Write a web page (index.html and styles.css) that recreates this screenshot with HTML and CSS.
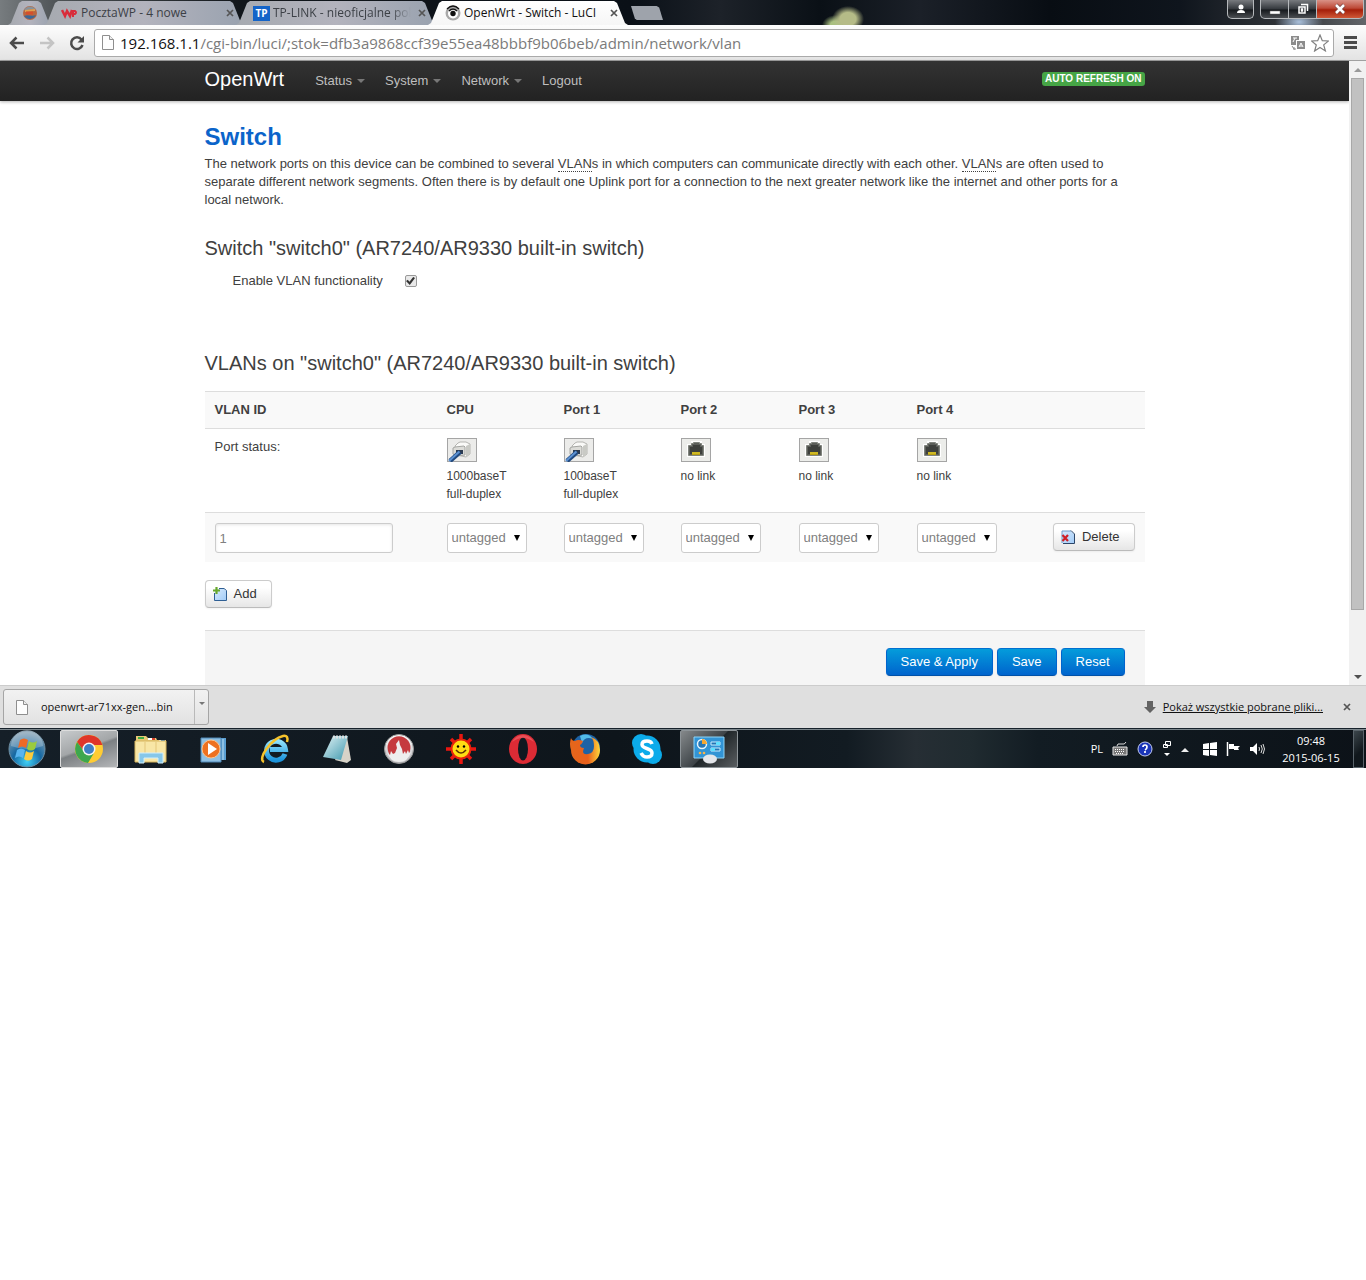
FILE: index.html
```html
<!DOCTYPE html>
<html lang="en">
<head>
<meta charset="utf-8">
<title>OpenWrt - Switch - LuCI</title>
<link rel="stylesheet" href="styles.css">
</head>
<body>
<svg class="defs" width="0" height="0" aria-hidden="true">
  <defs>
    <linearGradient id="blueSheet" x1="0" y1="0" x2="1" y2="1"><stop offset="0" stop-color="#d5e9fc"/><stop offset="1" stop-color="#a4cdf8"/></linearGradient>
    <radialGradient id="orb" cx=".5" cy=".85" r=".8"><stop offset="0" stop-color="#3fd0f6"/><stop offset=".5" stop-color="#1668a2"/><stop offset="1" stop-color="#7f9db2"/></radialGradient>
    <linearGradient id="ieBlue" x1="0" y1="0" x2="0" y2="1"><stop offset="0" stop-color="#8fe0fb"/><stop offset="1" stop-color="#1c94dc"/></linearGradient>
    <linearGradient id="silver" x1="0" y1="0" x2="0" y2="1"><stop offset="0" stop-color="#fff"/><stop offset="1" stop-color="#b4b4b8"/></linearGradient>
    <linearGradient id="noteGlass" x1="0" y1="0" x2="1" y2="1"><stop offset="0" stop-color="#e2f3f5"/><stop offset="1" stop-color="#3e98ae"/></linearGradient>
    <linearGradient id="foxFire" x1="0" y1="0" x2="1" y2="0"><stop offset="0" stop-color="#e4671c"/><stop offset=".6" stop-color="#e9601c"/><stop offset="1" stop-color="#ffd83c"/></linearGradient>
    <symbol id="plug" viewBox="0 0 30 24">
      <rect x=".5" y=".5" width="29" height="23" fill="#ececea" stroke="#a5a5a5"/>
      <path d="M8 8l3-3 2-1h6l4 2v10l-4 3-9-2z" fill="#fafaf8" stroke="#b5b5b1"/>
      <path d="M19 8l4-2v10l-4 3z" fill="#c9cac5"/>
      <path d="M6 10l2-1 9-1 1 1v8l-8 1-4-2z" fill="#dcdcd8" stroke="#a5a6a2"/>
      <path d="M9 12h7v4h-7z" fill="#2c3b50"/>
      <path d="M13 14L3 23" stroke="#20497f" stroke-width="4.500"/>
      <path d="M12.500 13.500L2 23" stroke="#5c91d2" stroke-width="2"/>
    </symbol>
    <symbol id="socket" viewBox="0 0 30 24">
      <rect x=".5" y=".5" width="29" height="23" fill="#ecedea" stroke="#a5a5a5"/>
      <path d="M6 6h4V3h11v3h3v13H6z" fill="#fff"/>
      <path d="M7.500 7.500h3v-2h2v-1h6v1h2v2h2v10h-15z" fill="#5b5e59" stroke="#80847d"/>
      <path d="M9 16V9h3V7h7v2h2v7z" fill="#3d403c"/>
      <path d="M11 14h8v3h-8z" fill="#b79e13"/><path d="M12 14v2m2-2v2m2-2v2m2-2v2" stroke="#e6d333"/>
    </symbol>
    <symbol id="file" viewBox="0 0 14 17">
      <path d="M1.500 1.500h7l4 4v10h-11z" fill="#fdfdfd" stroke="#8e8e8e"/><path d="M8.500 1.500v4h4" fill="#eee" stroke="#8e8e8e"/>
    </symbol>
    <symbol id="close" viewBox="0 0 8 8"><path d="M1 1l6 6M7 1L1 7" stroke="#555" stroke-width="1.700"/></symbol>
  </defs>
</svg>

<header class="titlebar">
  <div class="tabs">
    <a class="tab tab-pinned" href="#" aria-label="Pinned tab">
      <svg width="16" height="16" viewBox="0 0 16 16"><circle cx="8" cy="8" r="7" fill="#b9663f"/><path d="M2 5a7 7 0 0 1 12 0c-4-2-8 1-12 0z" fill="#87929c"/><path d="M3 6l10-1" stroke="#dfa050" stroke-width="2"/><path d="M2 11c4-2 8 1 12-1a7 7 0 0 1-12 1z" fill="#3d6795"/><path d="M4 8h7" stroke="#d64e2b" stroke-width="3"/></svg>
    </a>
    <div class="tab">
      <svg width="17" height="16" viewBox="0 0 17 16"><path d="M1 5l3 6 2-5 3 5 2-6" fill="none" stroke="#d92d3b" stroke-width="2.500"/><path d="M12 12V6h2q2 1.500 0 3h-2" fill="none" stroke="#d92d3b" stroke-width="2"/></svg>
      <a href="#">PocztaWP - 4 nowe</a>
      <button class="close" aria-label="Close tab"><svg width="8" height="8"><use href="#close"/></svg></button>
    </div>
    <div class="tab">
      <span class="tp">TP</span>
      <a class="fade" href="#">TP-LINK - nieoficjalne pol</a>
      <button class="close" aria-label="Close tab"><svg width="8" height="8"><use href="#close"/></svg></button>
    </div>
    <div class="tab tab-active">
      <svg width="16" height="16" viewBox="0 0 16 16"><circle cx="8" cy="8" r="7.500" fill="#a9a9a9"/><circle cx="8" cy="8.500" r="5" fill="#fff"/><circle cx="8" cy="8.500" r="2.700" fill="#111"/><path d="M2 4q6-6 12 0M4 6q4-4 8 0" fill="none" stroke="#111" stroke-width="1.300"/></svg>
      <a href="#">OpenWrt - Switch - LuCI</a>
      <button class="close" aria-label="Close tab"><svg width="8" height="8"><use href="#close"/></svg></button>
    </div>
    <button class="newtab" aria-label="New tab"></button>
  </div>
  <div class="window-buttons">
    <button class="wbtn user" aria-label="User"><svg width="12" height="12" viewBox="0 0 12 12"><circle cx="6" cy="4" r="2.500" fill="#fff"/><path d="M2 10q0-3 4-3t4 3z" fill="#fff"/></svg></button>
    <div class="wgroup">
      <button class="wbtn" aria-label="Minimize"><svg width="12" height="12" viewBox="0 0 12 12"><path d="M1 8h10v3H1z" fill="#fff" stroke="#666" stroke-width=".5"/></svg></button>
      <button class="wbtn" aria-label="Restore"><svg width="12" height="12" viewBox="0 0 12 12"><path d="M4 1.500h6.500V8M2 4h6v6H2zM4.500 6h1v2h-1z" fill="none" stroke="#fff" stroke-width="1.500"/></svg></button>
      <button class="wbtn wclose" aria-label="Close"><svg width="12" height="12" viewBox="0 0 12 12"><path d="M2 2l8 8M10 2l-8 8" stroke="#744" stroke-width="4"/><path d="M2 2l8 8M10 2l-8 8" stroke="#fff" stroke-width="2.500"/></svg></button>
    </div>
  </div>
</header>

<div class="toolbar">
  <button class="tool" aria-label="Back"><svg width="16" height="14" viewBox="0 0 16 14"><path d="M15 7H2M7.500 1.500L2 7l5.500 5.500" fill="none" stroke="#4b4b4b" stroke-width="2.500"/></svg></button>
  <button class="tool" aria-label="Forward"><svg width="16" height="14" viewBox="0 0 16 14"><path d="M1 7h13M8.500 1.500L14 7l-5.500 5.500" fill="none" stroke="#c4c4c4" stroke-width="2.500"/></svg></button>
  <button class="tool" aria-label="Reload"><svg width="16" height="16" viewBox="0 0 16 16"><path d="M12.500 4.500A5.800 5.800 0 1 0 13.500 10" fill="none" stroke="#4b4b4b" stroke-width="2.500"/><path d="M15 1v6.500H8.500z" fill="#4b4b4b"/></svg></button>
  <div class="omnibox">
    <svg width="14" height="17"><use href="#file"/></svg>
    <span class="host">192.168.1.1</span>
    <input class="path" type="text" aria-label="Address" value="/cgi-bin/luci/;stok=dfb3a9868ccf39e55ea48bbbf9b06beb/admin/network/vlan">
    <svg width="14" height="14" viewBox="0 0 14 14"><path d="M0 0h8v4H5v5H0z" fill="#8c8c8c"/><path d="M2 2h4M4 2L2 6" stroke="#fff"/><path d="M6 5h8v8H6z" fill="#8c8c8c"/><path d="M8 11l2-4 2 4M9 10h2" fill="none" stroke="#fff"/><path d="M1 10l2 3h2M3 11v3" fill="none" stroke="#8c8c8c"/></svg>
    <svg width="18" height="18" viewBox="0 0 18 18"><path d="M9 1l2.300 5.700 6.200.3-4.800 3.900 1.700 6L9 13.500 3.600 17l1.700-6L.5 7l6.200-.3z" fill="#fff" stroke="#808080" stroke-width="1.200"/></svg>
  </div>
  <button class="tool menu" aria-label="Menu"><svg width="13" height="13" viewBox="0 0 13 13"><path d="M0 1.500h13M0 6.500h13M0 11.500h13" stroke="#4b4b4b" stroke-width="3"/></svg></button>
</div>

<div class="viewport">
  <div class="page">
    <nav class="navbar">
      <div class="container nav-inner">
        <a class="brand" href="#">OpenWrt</a>
        <a class="nav-link" href="#">Status<i class="caret"></i></a>
        <a class="nav-link" href="#">System<i class="caret"></i></a>
        <a class="nav-link" href="#">Network<i class="caret"></i></a>
        <a class="nav-link" href="#">Logout</a>
        <a class="badge" href="#">AUTO REFRESH ON</a>
      </div>
    </nav>
    <main class="container content">
      <h2>Switch</h2>
      <p>The network ports on this device can be combined to several <abbr title="Virtual Local Area Network">VLAN</abbr>s in which computers can communicate directly with each other. <abbr title="Virtual Local Area Network">VLAN</abbr>s are often used to separate different network segments. Often there is by default one Uplink port for a connection to the next greater network like the internet and other ports for a local network.</p>
      <section class="switch">
        <h3>Switch "switch0" (AR7240/AR9330 built-in switch)</h3>
        <div class="option">
          <label for="vlan-on">Enable VLAN functionality</label>
          <input id="vlan-on" type="checkbox" checked>
        </div>
      </section>
      <section class="vlans">
        <h3>VLANs on "switch0" (AR7240/AR9330 built-in switch)</h3>
        <table>
          <colgroup><col class="c-id"><col class="c-port"><col class="c-port"><col class="c-port-wide"><col class="c-port-wide"><col class="c-port-wide"><col></colgroup>
          <tr><th>VLAN ID</th><th>CPU</th><th>Port 1</th><th>Port 2</th><th>Port 3</th><th>Port 4</th><th></th></tr>
          <tr class="status">
            <td>Port status:</td>
            <td class="port"><svg width="30" height="24"><use href="#plug"/></svg>1000baseT<br>full-duplex</td>
            <td class="port"><svg width="30" height="24"><use href="#plug"/></svg>100baseT<br>full-duplex</td>
            <td class="port"><svg width="30" height="24"><use href="#socket"/></svg>no link</td>
            <td class="port"><svg width="30" height="24"><use href="#socket"/></svg>no link</td>
            <td class="port"><svg width="30" height="24"><use href="#socket"/></svg>no link</td>
            <td></td>
          </tr>
          <tr class="edit">
            <td><input class="vid" type="text" value="1" aria-label="VLAN ID"></td>
            <td><span class="select"><select aria-label="CPU"><option>untagged</option><option>tagged</option><option>off</option></select></span></td>
            <td><span class="select"><select aria-label="Port 1"><option>untagged</option><option>tagged</option><option>off</option></select></span></td>
            <td><span class="select"><select aria-label="Port 2"><option>untagged</option><option>tagged</option><option>off</option></select></span></td>
            <td><span class="select"><select aria-label="Port 3"><option>untagged</option><option>tagged</option><option>off</option></select></span></td>
            <td><span class="select"><select aria-label="Port 4"><option>untagged</option><option>tagged</option><option>off</option></select></span></td>
            <td class="act"><button class="btn"><svg width="16" height="16" viewBox="0 0 16 16"><path d="M2 2h9l3 3v9H2z" fill="url(#blueSheet)"/><path d="M2 2v12M2 2h9" stroke="#6f9cc9"/><path d="M11 1.500l3.500 3.500v9.500H3" fill="none" stroke="#2b4568"/><path d="M2.500 6l5.500 6M8 6l-5.500 6" stroke="#cf2027" stroke-width="2.200"/></svg>Delete</button></td>
          </tr>
        </table>
        <button class="btn"><svg width="16" height="16" viewBox="0 0 16 16"><path d="M3 3h9l2 2v9H3z" fill="url(#blueSheet)"/><path d="M2.500 7v7.500h12V4.500L12 2.500H7" fill="none" stroke="#2f5f94"/><path d="M4.500 1v7M1 4.500h7" stroke="#69a82d" stroke-width="2.200"/></svg>Add</button>
      </section>
      <div class="actions">
        <button class="btn primary">Save &amp; Apply</button>
        <button class="btn primary">Save</button>
        <button class="btn primary">Reset</button>
      </div>
    </main>
  </div>
  <div class="scrollbar"><i class="up"></i><div class="thumb"></div><div class="track"></div><i class="down"></i></div>
</div>

<div class="downloads">
  <div class="download"><button class="dl-file"><svg width="14" height="17"><use href="#file"/></svg>openwrt-ar71xx-gen....bin</button><button class="dl-more" aria-label="More"><i class="caret"></i></button></div>
  <svg class="dl-arrow" width="12" height="12" viewBox="0 0 12 12"><path d="M3 0h6v6h3l-6 6-6-6h3z" fill="#636363"/></svg>
  <a href="#">Pokaż wszystkie pobrane pliki...</a>
  <button class="close" aria-label="Close"><svg width="8" height="8"><use href="#close"/></svg></button>
</div>

<footer class="taskbar">
  <button class="start" aria-label="Start"><svg width="38" height="38" viewBox="0 0 38 38"><circle cx="19" cy="19" r="18" fill="url(#orb)" stroke="#6f8fa3"/><path d="M3 16a16 16 0 0 1 32 0q-16 6-32 0z" fill="#fff" opacity=".25"/><path d="M12 10q4-3 8 0l-2 8q-4-3-8 0z" fill="#ee6a26"/><path d="M21 11q4 3 8 0l-2 8q-4 3-8 0z" fill="#9acb3f"/><path d="M9 20q4-3 8 0l-2 8q-4-3-8 0z" fill="#58b4ef"/><path d="M18 21q4 3 8 0l-2 8q-4 3-8 0z" fill="#fccb3a"/></svg></button>
  <div class="apps">
    <button class="app open bright" aria-label="Chrome"><svg width="30" height="30" viewBox="0 0 30 30"><circle cx="15" cy="15" r="14" fill="#fc3"/><path d="M3 8a14 14 0 0 1 25.500 3H15a5 5 0 0 0-6 5z" fill="#df3529"/><path d="M3 8a14 14 0 0 0 11 21l6-10q-7 4-11-3z" fill="#3da74e"/><circle cx="15" cy="15" r="6.500" fill="#f5f5f5"/><circle cx="15" cy="15" r="5" fill="#3f7fc4"/></svg></button>
    <button class="app" aria-label="Explorer"><svg width="34" height="30" viewBox="0 0 34 30"><path d="M2 5V2h10l2 2h8l1 2h9v22H2z" fill="#e8c976"/><path d="M4 3h6v2H4z" fill="#3fab43"/><path d="M14 4h7v2h-7zM25 6h6v2h-6z" fill="#fff"/><path d="M18 4h3v2h-3z" fill="#d9452c"/><path d="M27 6h4v2h-4z" fill="#2e7ac5"/><path d="M1 7h31v21H1z" fill="#f8e6a6" stroke="#d7b55e"/><path d="M11 8v12M22 8v12" stroke="#e3c67a"/><path d="M5 29V19h24v10h-5v-5H10v5z" fill="#86c7e9" stroke="#d2effb"/></svg></button>
    <button class="app" aria-label="Media Player"><svg width="30" height="30" viewBox="0 0 30 30"><path d="M16 4h12v22H16z" fill="#5b9fd2"/><path d="M3 4h20v24H3z" fill="#8fc0e3" stroke="#4f87b5"/><path d="M25 5v21" stroke="#c0e0f3"/><circle cx="13" cy="15" r="9" fill="#ee7120" stroke="#ffc38a"/><path d="M10 9l9 6-9 6z" fill="#fff"/></svg></button>
    <button class="app" aria-label="Internet Explorer"><svg width="32" height="30" viewBox="0 0 32 30"><path d="M26 20A9.500 9.500 0 1 1 26.500 15.500H11" fill="none" stroke="url(#ieBlue)" stroke-width="5"/><path d="M5 28C-2 25 12 5 24 2q6-1 4 6" fill="none" stroke="#f6c32c" stroke-width="2.500"/></svg></button>
    <button class="app" aria-label="Notepad"><svg width="32" height="30" viewBox="0 0 32 30"><path d="M26 3l4 23-4 3-12-3z" fill="#d7d3c8"/><path d="M12 2h15l-7 24-18-3z" fill="url(#noteGlass)"/><path d="M12 3h15" stroke="#dce2e4" stroke-width="3" stroke-dasharray="2 1"/></svg></button>
    <button class="app" aria-label="Burner"><svg width="32" height="32" viewBox="0 0 32 32"><circle cx="16" cy="16" r="14.500" fill="url(#silver)" stroke="#999"/><path d="M5 18a11.500 11.500 0 1 1 22 0l-2 5H7z" fill="#c53a3e"/><path d="M4 19l3 3 1-4 2 3 2-1 2-5-1-4 3-4 1 5 2 4 1 5 2-3 1 3 2-4 1 3 2-1q-3 10-12 10T4 19z" fill="#eee"/></svg></button>
    <button class="app" aria-label="Gadu-Gadu"><svg width="32" height="32" viewBox="0 0 32 32"><path d="M16 1v30M1 16h30M6 6l20 20M26 6L6 26" stroke="#ea1610" stroke-width="3.500"/><circle cx="16" cy="16" r="9.500" fill="#ffdc13" stroke="#e9230b" stroke-width="2"/><circle cx="13" cy="13.500" r="1.200"/><circle cx="19" cy="13.500" r="1.200"/><path d="M11 17q5 6 10 0" fill="none" stroke="#5d3200" stroke-width="1.500"/></svg></button>
    <button class="app" aria-label="Opera"><svg width="30" height="32" viewBox="0 0 30 32"><ellipse cx="15" cy="16" rx="14" ry="15" fill="#dc2b35"/><ellipse cx="15" cy="16" rx="5" ry="11.500" fill="#101820"/><path d="M4 9q4-7 11-7 7 0 11 7-6-4-11-4T4 9z" fill="#f57278" opacity=".5"/></svg></button>
    <button class="app" aria-label="Firefox"><svg width="32" height="32" viewBox="0 0 32 32"><circle cx="17" cy="15" r="14" fill="#1d62a5"/><path d="M11 3q8-4 13 3-8-3-11 4z" fill="#52bce8"/><path d="M2 5q1 3 4 3 3-2 8 0-1 3-3 4 0 3 4 3-3 7 4 6 6-1 6-8 0-6-3-9 9 3 9 13a14.500 14.500 0 0 1-29 0Q0 11 2 5z" fill="url(#foxFire)"/></svg></button>
    <button class="app" aria-label="Skype"><svg width="32" height="32" viewBox="0 0 32 32"><circle cx="10" cy="10" r="9" fill="#0cabea"/><circle cx="22" cy="22" r="9" fill="#0cabea"/><circle cx="16" cy="16" r="13.500" fill="#0cabea"/><path d="M21 11q-1-3-5-3-5 0-5 3.500c0 5 10 3 10 8.500q0 4-5 4-4 0-6-4" fill="none" stroke="#fff" stroke-width="3.500"/></svg></button>
    <button class="app open" aria-label="Control Panel"><svg width="34" height="30" viewBox="0 0 34 30"><path d="M2 3h30v21H2z" fill="#3294d5" stroke="#8fd4f6"/><circle cx="10" cy="10" r="4.500" fill="#2678b8" stroke="#e6f4fb" stroke-width="1.500"/><path d="M10 10V5a5 5 0 0 1 5 5z" fill="#f5a733"/><path d="M19 8h9v3h-9zM19 14h9v3h-9z" fill="#2374b4" stroke="#c9edff"/><path d="M24 8h4v3h-4zM19 14h4v3h-4z" fill="#5ee0ff"/><circle cx="8" cy="19" r="1.300" fill="#f9b44b"/><circle cx="12" cy="19" r="1.300" fill="#f9b44b"/><ellipse cx="18" cy="25" rx="7" ry="4.500" fill="#e4e6ea"/></svg></button>
  </div>
  <div class="tray">
    <span>PL</span>
    <svg width="16" height="14" viewBox="0 0 16 14"><path d="M5 4q0-3 4-2t5-2" fill="none" stroke="#ddd"/><path d="M1 5h14v8H1z" fill="#777" stroke="#e5e5e5"/><path d="M3 7.500h10M3 9.500h10M4 11.500h8" stroke="#fff" stroke-dasharray="1 1"/></svg>
    <svg width="16" height="16" viewBox="0 0 16 16"><circle cx="8" cy="8" r="7" fill="#1a35b8" stroke="#c4cdf0"/><path d="M6 6q0-2 2-2t2 2-2 3m0 1v2" fill="none" stroke="#fff" stroke-width="1.700"/></svg>
    <svg width="10" height="18" viewBox="0 0 10 18"><path d="M3.500 1.500h5v4h-5zM1.500 4.500h4v3h-4z" fill="#17202a" stroke="#fff"/><path d="M2 13h6l-3 3z" fill="#fff"/></svg>
    <svg width="8" height="14" viewBox="0 0 8 14"><path d="M0 10h8L4 6z" fill="#eee"/></svg>
    <svg class="status-icons" width="14" height="14" viewBox="0 0 14 14"><path d="M0 2l6-1v6H0zM7 1l7-1v7H7zM0 8h6v6l-6-1zM7 8h7v6l-7-1z" fill="#fff"/></svg>
    <svg width="15" height="14" viewBox="0 0 15 14"><path d="M1.500 0v14" stroke="#fff" stroke-width="1.500"/><path d="M3 2h5v2h6l-2 2 1 2H8V7H3z" fill="#fff"/></svg>
    <svg width="15" height="14" viewBox="0 0 15 14"><path d="M0 5h3l4-4v12L3 9H0z" fill="#fff"/><path d="M9 5q1 2 0 4M11 3q2.500 4 0 8M13 2q3 5 0 10" fill="none" stroke="#ddd"/></svg>
    <div class="clock"><div>09:48</div><div>2015-06-15</div></div>
    <button class="peek" aria-label="Show desktop"></button>
  </div>
</footer>
</body>
</html>
```
FILE: styles.css
```css
* { box-sizing: border-box; }
body { margin: 0; background: #fff; color: #404040; font: 13px/18px "Liberation Sans", Arial, sans-serif; }
button { border: 0; padding: 0; background: none; font: inherit; color: inherit; }
button svg { display: block; }
a { color: inherit; text-decoration: none; }
.defs { position: absolute; }

/* window frame */
.titlebar, .downloads, .tray { font-family: "Open Sans", "Noto Sans", sans-serif; }
.titlebar {
  display: flex; justify-content: space-between; height: 25px; overflow: hidden;
  background:
    radial-gradient(ellipse 16px 13px at 848px 19px, #b5bb87 50%, transparent),
    radial-gradient(ellipse 14px 10px at 836px 25px, #a9c080 40%, transparent),
    radial-gradient(ellipse 24px 14px at 1299px 22px, #a9bfda, transparent),
    linear-gradient(90deg, #777c7f 0, #4c5154 60px, #11161b 240px, #0a1017 630px, #1d2229 720px, #0a1016 820px, #1b2028 920px, #080d13 1050px, #0f151d 1180px, #35383c 1300px, #63666a 100%);
}
.tabs { display: flex; padding: 1px 0 0 8px; font-size: 12px; line-height: 24px; color: #3c4046; }
.tab {
  display: flex; align-items: center; gap: 3px; width: 200px; height: 24px; padding: 0 6px 0 17px; margin-right: -8px;
  background: linear-gradient(90deg, #a6aab0, #b3b3bd 50%, #99a2af);
  clip-path: polygon(0 100%, 3px 92%, 11px 8%, 14px 0, calc(100% - 14px) 0, calc(100% - 11px) 8%, calc(100% - 3px) 92%, 100% 100%);
}
.tab a { flex: 1; white-space: nowrap; overflow: hidden; }
.tab-pinned { width: 44px; padding: 0 14px; }
.tab-active { background: linear-gradient(#fff, #f6f6f6); color: #111; margin-right: 0; }
.fade { mask-image: linear-gradient(90deg, #000 85%, transparent); }
.tp { width: 17px; background: #1464c8; color: #fff; font: bold 10px/15px "Open Sans", sans-serif; text-align: center; }
.close { display: grid; place-items: center; width: 16px; height: 16px; }
.newtab { width: 32px; height: 14px; margin: 5px 0 0 3px; background: #9ea3ab; clip-path: polygon(0 0, 80% 0, 88% 10%, 100% 100%, 18% 100%, 12% 90%); }
.window-buttons { display: flex; gap: 6px; padding-right: 2px; }
.wgroup { display: flex; }
.wbtn { display: grid; place-items: center; width: 27px; height: 19px; border: 1px solid #b6b9bc; border-top: 0; background: linear-gradient(#777a7e, #34383d 50%, #16191d 55%, #4b4e52); border-radius: 0 0 5px 5px; }
.wgroup .wbtn { width: 29px; border-radius: 0; margin-right: -1px; }
.wgroup .wbtn:first-child { border-radius: 0 0 0 5px; }
.wgroup .wclose { width: 48px; margin-right: 0; border-radius: 0 0 5px; background: linear-gradient(#d99287, #bd4937 45%, #a51f0a 55%, #cf5837); }

/* toolbar */
.toolbar { display: flex; align-items: center; gap: 4px; height: 36px; padding: 0 4px; background: linear-gradient(#fdfdfd, #e3e3e3); border-bottom: 1px solid #a0a0a0; }
.tool { display: grid; place-items: center; width: 26px; height: 26px; }
.menu { width: 24px; }
.omnibox { flex: 1; display: flex; align-items: center; height: 28px; padding: 0 4px 0 6px; background: #fff; border: 1px solid #aaa; border-radius: 3px; font: 15px/24px "Open Sans", sans-serif; }
.host { padding-left: 5px; color: #111; }
.path { flex: 1; min-width: 0; height: 24px; padding: 0; border: 0; outline: 0; background: none; color: #7b7b7b; font: inherit; }
.omnibox svg + svg { margin-left: 6px; }

/* page area */
.viewport { display: flex; }
.page { flex: 1; min-width: 0; }
.container { max-width: 940px; margin: 0 auto; }
.navbar { height: 40px; background: linear-gradient(#333, #222); box-shadow: 0 1px 3px rgba(0, 0, 0, .3); }
.nav-inner { display: flex; align-items: flex-start; height: 40px; color: #bfbfbf; }
.brand { padding: 8px 21px 12px 0; color: #fff; font-size: 20px; line-height: 20px; }
.nav-link { display: flex; align-items: center; gap: 5px; padding: 10px 10px 11px; line-height: 19px; }
.caret { border: 4px solid transparent; border-top-color: #777; border-bottom: 0; }
.badge { margin: 11px 0 0 auto; padding: 1px 3px; border-radius: 3px; background: #46a546; color: #fff; font-size: 10px; font-weight: bold; line-height: 12px; }
.content { padding-top: 18px; }
h2 { margin: 0; font-size: 24px; line-height: 36px; color: #0b64ca; }
h3 { margin: 0; font-size: 20px; line-height: 30px; font-weight: normal; }
p { margin: 0; }
abbr { text-decoration: none; border-bottom: 1px dotted #404040; }
.switch { padding-top: 24px; }
.option { display: flex; align-items: center; gap: 20px; height: 36px; padding: 0 0 0 28px; }
.option label { width: 152px; }
.option input { appearance: none; display: grid; place-items: center; width: 12px; height: 12px; margin: 0; border: 1px solid #999; border-radius: 2px; background: #e9e9e9; }
.option input::after { content: ""; width: 9px; height: 8px; background: #333; clip-path: polygon(0 50%, 20% 35%, 38% 60%, 80% 0, 100% 12%, 42% 100%); }
.vlans { padding-top: 49px; }
table { width: 100%; table-layout: fixed; border-collapse: collapse; margin: 13px 0 18px; }
.c-id { width: 232px; }
.c-port { width: 117px; }
.c-port-wide { width: 118px; }
th, td { padding: 9px 10px; border-top: 1px solid #ddd; text-align: left; vertical-align: top; }
th { background: #f9f9f9; height: 37px; }
.status td { height: 84px; }
.port { font-size: 12px; }
.port svg { display: block; margin-bottom: 5px; }
.edit td { height: 49px; padding: 10px 10px 9px; background: #f9f9f9; line-height: 0; }
.vid, select { height: 30px; padding: 4px; border: 1px solid #ccc; border-radius: 3px; background: #fff; color: #808080; font: 13px/18px "Liberation Sans", Arial, sans-serif; }
.vid { width: 178px; box-shadow: inset 0 1px 3px rgba(0, 0, 0, .1); }
.select { display: inline-block; position: relative; }
select { appearance: none; width: 80px; }
.select::after { content: ""; position: absolute; right: 7px; top: 12px; border: 3px solid transparent; border-top: 6px solid #000; border-bottom: 0; pointer-events: none; }
.act { text-align: right; }
.btn { display: inline-flex; align-items: center; gap: 6px; height: 28px; padding: 0 14px 0 6px; border: 1px solid #ccc; border-bottom-color: #bbb; border-radius: 4px; background: linear-gradient(#fff 25%, #e6e6e6); box-shadow: 0 1px 2px rgba(0, 0, 0, .05); color: #333; line-height: 18px; }
.actions { display: flex; justify-content: flex-end; gap: 4px; margin-top: 22px; padding: 17px 20px 9px; border-top: 1px solid #ddd; background: #f5f5f5; }
.primary { padding: 0 14px; border-color: #0070d0 #0064cd #0051a8; background: linear-gradient(#049cdb, #0064cd); color: #fff; }
.scrollbar { display: flex; flex-direction: column; align-items: center; width: 17px; padding: 7px 0 6px; background: #f1f1f1; }
.up, .down { border: 4px solid transparent; }
.up { border-bottom-color: #999; border-top: 0; margin-bottom: 6px; }
.down { border-top-color: #505050; border-bottom: 0; }
.thumb { flex: 532; width: 13px; background: #c1c1c1; border: 1px solid #a8a8a8; }
.track { flex: 65; }

/* download shelf */
.downloads { display: flex; align-items: center; height: 43px; padding: 0 11px 0 3px; background: #dfdfdf; border-top: 1px solid #ccc; color: #111; font-size: 11px; }
.downloads > a { margin: 0 16px 0 7px; text-decoration: underline; }
.download { display: flex; height: 36px; border: 1px solid #a5a5a5; border-radius: 3px; background: linear-gradient(#f2f2f2, #e2e2e2); }
.dl-file { display: flex; align-items: center; gap: 12px; width: 191px; padding-left: 11px; border-right: 1px solid #b9b9b9; white-space: nowrap; }
.dl-more { display: grid; place-items: start center; width: 13px; padding-top: 12px; }
.dl-more .caret { border-width: 3px 3px 0; }
.dl-arrow { margin-left: auto; }

/* taskbar */
.taskbar { display: flex; height: 40px; border-top: 1px solid #17222b; box-shadow: inset 0 1px #7b868c; background: linear-gradient(90deg, #151f28, #0e151b 45%, #121b22 62%, #262e34 67%, #202b30 71%, #121c23 76%, #0c1218); }
.start { width: 54px; display: grid; place-items: center; }
.apps { display: flex; gap: 4px; padding-left: 6px; }
.app { display: grid; place-items: center; width: 58px; height: 38px; margin-top: 1px; }
.open { border: 1px solid #8d9498; border-radius: 2px; background: linear-gradient(135deg, #85898b, #3d4347 50%, #202629 52%, #5a5e61); }
.bright { border-color: #ddd; background: linear-gradient(160deg, #c7cacc, #a3a6a8 45%, #7c8083 50%, #b4b6b8); }
.tray { display: flex; align-items: center; gap: 9px; margin-left: auto; padding-right: 2px; color: #fff; font-size: 11px; line-height: 17px; }
.status-icons { margin-left: 5px; }
.clock { width: 74px; text-align: center; }
.peek { width: 11px; height: 38px; margin-left: -4px; border: 1px solid #59636a; background: linear-gradient(135deg, #3c464c, #10171c 60%); }
```
